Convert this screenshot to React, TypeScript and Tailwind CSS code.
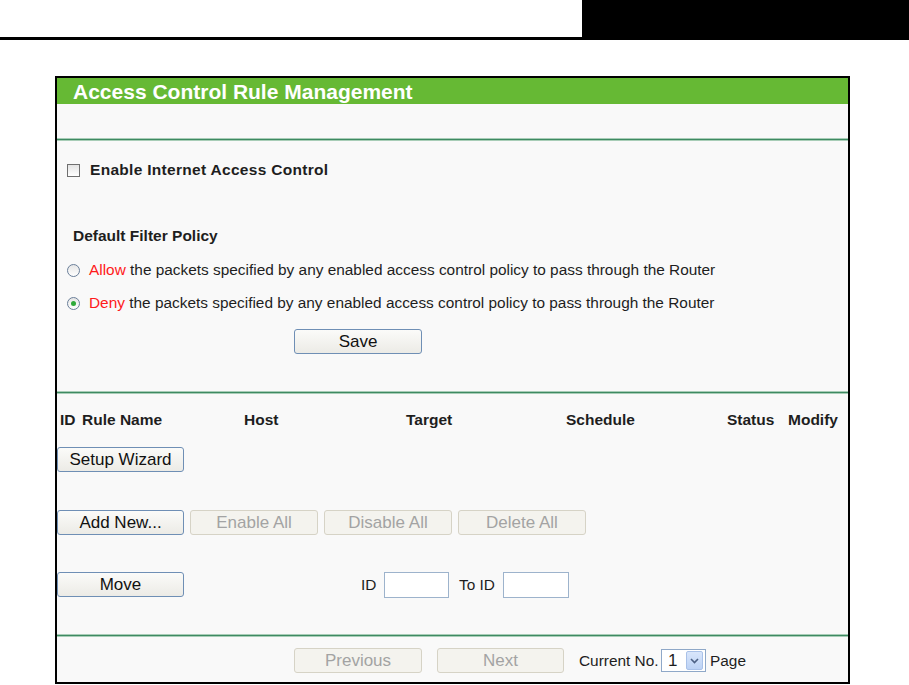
import React from 'react';

const font = { fontFamily: '"Liberation Sans", Arial, sans-serif' };

function Btn({ children, w, disabled }: { children: React.ReactNode; w: string; disabled?: boolean }) {
  return (
    <button
      className={
        disabled
          ? `${w} h-[25px] rounded-[3px] border border-[#d6d3c6] bg-[#f4f3ee] text-[17px] leading-none text-[#a3a3a3]`
          : `${w} h-[25px] rounded-[3px] border border-[#6f8fb5] bg-gradient-to-b from-[#fbfbf9] to-[#ecebe6] text-[17px] leading-none text-[#111]`
      }
    >
      {children}
    </button>
  );
}

function Sep() {
  return (
    <div className="flex flex-col">
      <div className="h-px bg-[#a8cdb7]" />
      <div className="h-px bg-[#3e8a62]" />
      <div className="h-px bg-[#a8cdb7]" />
    </div>
  );
}

function Radio({ checked }: { checked?: boolean }) {
  return (
    <span className="w-[13px] h-[13px] rounded-full border border-[#6a7f99] bg-gradient-to-b from-[#e6e6e6] to-white flex items-center justify-center">
      {checked && <span className="w-[5px] h-[5px] rounded-full bg-[#2faa3a]" />}
    </span>
  );
}

export default function App() {
  return (
    <div className="w-[909px] h-[685px] bg-white overflow-hidden text-[#1e1e1e]" style={font}>
      <div className="flex">
        <div className="flex-1 h-[40px] border-b-[3px] border-black" />
        <div className="w-[327px] h-[40px] bg-black" />
      </div>

      <div className="ml-[55px] mt-[36px] w-[795px] border-2 border-black bg-[#f9f9f9]">
        <div className="h-[26px] bg-[#66b934] pl-[16px] flex items-center">
          <span className="text-white font-bold text-[21px] leading-none">Access Control Rule Management</span>
        </div>
        <div className="h-[34px]" />
        <Sep />

        {/* policy section */}
        <div className="pt-[19px] pb-[37px]">
          <div className="h-[20px] flex items-center pl-[10px] gap-[10px]">
            <span className="w-[13px] h-[13px] border border-[#6f6f6f] bg-gradient-to-b from-[#e4e4e4] to-white" />
            <span className="font-bold text-[15.5px] tracking-[0.3px]">Enable Internet Access Control</span>
          </div>
          <div className="mt-[46px] h-[20px] flex items-center pl-[16px]">
            <span className="font-bold text-[15.5px]">Default Filter Policy</span>
          </div>
          <div className="mt-[14px] h-[20px] flex items-center pl-[10px] gap-[9px] text-[15.4px]">
            <Radio />
            <span>
              <span className="text-[#ff1a1a]">Allow</span> the packets specified by any enabled access control policy to pass through the Router
            </span>
          </div>
          <div className="mt-[13px] h-[20px] flex items-center pl-[10px] gap-[9px] text-[15.4px]">
            <Radio checked />
            <span>
              <span className="text-[#ff1a1a]">Deny</span> the packets specified by any enabled access control policy to pass through the Router
            </span>
          </div>
          <div className="mt-[16px] pl-[237px]">
            <Btn w="w-[128px]">Save</Btn>
          </div>
        </div>
        <Sep />

        {/* rules section */}
        <div className="pt-[16px] pb-[37px]">
          <div className="h-[20px] flex items-center pl-[3px] font-bold text-[15.5px]">
            <span className="w-[22px]">ID</span>
            <span className="w-[162px]">Rule Name</span>
            <span className="w-[162px]">Host</span>
            <span className="w-[160px]">Target</span>
            <span className="w-[161px]">Schedule</span>
            <span className="w-[61px]">Status</span>
            <span>Modify</span>
          </div>
          <div className="mt-[17px]">
            <Btn w="w-[127px]">Setup Wizard</Btn>
          </div>
          <div className="mt-[38px] flex gap-[6px]">
            <Btn w="w-[127px]">Add New...</Btn>
            <Btn w="w-[128px]" disabled>Enable All</Btn>
            <Btn w="w-[128px]" disabled>Disable All</Btn>
            <Btn w="w-[128px]" disabled>Delete All</Btn>
          </div>
          <div className="mt-[37px] h-[25px] flex items-center text-[15.4px]">
            <Btn w="w-[127px]">Move</Btn>
            <span className="ml-[177px] w-[23px]">ID</span>
            <span className="w-[65px] h-[26px] border border-[#9db3cc] bg-white" />
            <span className="ml-[10px] w-[44px]">To ID</span>
            <span className="w-[66px] h-[26px] border border-[#9db3cc] bg-white" />
          </div>
        </div>
        <Sep />

        {/* pager */}
        <div className="h-[45px] pt-[11px] flex items-start text-[15.4px]">
          <div className="ml-[237px]">
            <Btn w="w-[128px]" disabled>Previous</Btn>
          </div>
          <div className="ml-[15px]">
            <Btn w="w-[127px]" disabled>Next</Btn>
          </div>
          <div className="ml-[15px] h-[25px] flex items-center">
            <span className="w-[82px]">Current No.</span>
            <span className="w-[45px] h-[23px] border border-[#8fa8c8] bg-white flex items-center">
              <span className="flex-1 pl-[6px] text-[17px] leading-none">1</span>
              <span className="w-[17px] h-[19px] mr-[2px] rounded-[2px] bg-gradient-to-b from-[#d9e6fb] to-[#bcd2f5] border border-[#a9c1e8] flex items-center justify-center">
                <svg width="9" height="6" viewBox="0 0 9 6">
                  <path d="M1 1 L4.5 4.5 L8 1" fill="none" stroke="#4d6185" strokeWidth="1.6" />
                </svg>
              </span>
            </span>
            <span className="ml-[4px]">Page</span>
          </div>
        </div>
      </div>
    </div>
  );
}
